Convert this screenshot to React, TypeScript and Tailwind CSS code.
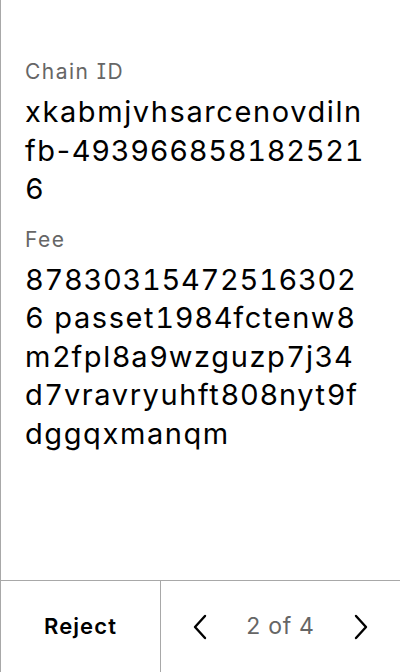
const fields = [
  { label: "Chain ID", lines: ["xkabmjvhsarcenovdiln", "fb-493966858182521", "6"] },
  {
    label: "Fee",
    lines: ["87830315472516302", "6 passet1984fctenw8", "m2fpl8a9wzguzp7j34", "d7vravryuhft808nyt9f", "dggqxmanqm"],
  },
];

// digits run a little tighter than letters
function Line({ text }: { text: string }) {
  return (
    <div>
      {text.split(/(\d+)/).map((part, i) =>
        /^\d+$/.test(part) ? (
          <span key={i} className="tabular-nums tracking-[0.024em]">
            {part}
          </span>
        ) : (
          <span key={i}>{part}</span>
        )
      )}
    </div>
  );
}

function Chevron({ dir }: { dir: "left" | "right" }) {
  return (
    <svg width="16" height="26" viewBox="0 0 16 26" fill="none" stroke="currentColor" strokeWidth="2.4" strokeLinecap="round" strokeLinejoin="round">
      <polyline points={dir === "left" ? "13,2 3,13 13,24" : "3,2 13,13 3,24"} />
    </svg>
  );
}

export default function App() {
  return (
    <div
      className="flex h-[672px] w-[400px] flex-col border-l border-[#a8a8a8] bg-white text-black [font-feature-settings:'cv08']"
      style={{ fontFamily: "Inter, 'Noto Sans', sans-serif" }}
    >
      {/* Fields */}
      <div className="flex-1 pl-6 pr-4 pt-[58px]">
        {fields.map((f) => (
          <div key={f.label} className="mb-[17px]">
            <div className="mb-[7px] text-[21px] leading-[28px] tracking-[0.07em] text-[#666]">{f.label}</div>
            <div className="text-[29px] leading-[38.5px] tracking-[0.055em] whitespace-pre">
              {f.lines.map((l, i) => (
                <Line key={i} text={l} />
              ))}
            </div>
          </div>
        ))}
      </div>

      {/* Footer */}
      <div className="flex h-[92px] border-t border-[#a8a8a8]">
        <button className="flex w-[160px] items-center justify-center border-r border-[#a8a8a8] text-[22px] font-semibold tracking-[0.05em]">
          Reject
        </button>
        <div className="flex flex-1 items-center justify-between px-[31px]">
          <Chevron dir="left" />
          <span className="text-[23px] tracking-[0.03em] text-[#666]">2 of 4</span>
          <Chevron dir="right" />
        </div>
      </div>
    </div>
  );
}
